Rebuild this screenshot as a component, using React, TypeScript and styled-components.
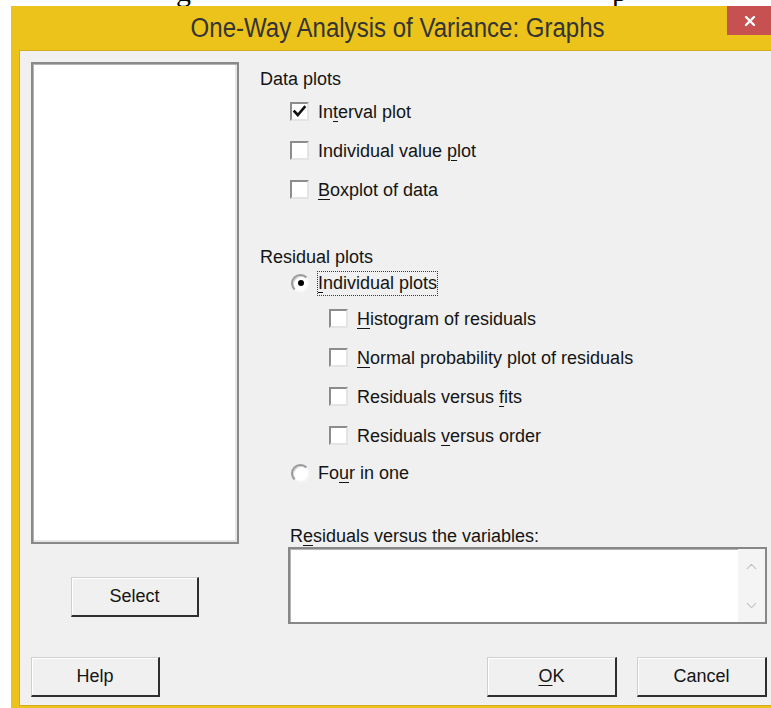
import styled, { createGlobalStyle } from 'styled-components'
import { ChevronUp, ChevronDown, X } from 'lucide-react'

const Global = createGlobalStyle`
    html, body {
        margin: 0;
        padding: 0;
        background: #ffffff;
        overflow: hidden;
    }
    body {
        width: 771px;
        height: 708px;
        font-family: "Liberation Sans", Arial, sans-serif;
    }
`

const FONT = `"Liberation Sans", Arial, sans-serif`

export default function App(){
    return(
        <>
            <Global />
            <DocStrip>
                <DocLine>
                    <Glyph $left={176}>g</Glyph>
                    <Glyph $left={421}>p</Glyph>
                </DocLine>
            </DocStrip>

            <Window>
                <TitleBar>
                    <Title><TitleText>One-Way Analysis of Variance: Graphs</TitleText></Title>
                    <CloseButton>
                        <X size={16} strokeWidth={3.6} color="#ffffff" />
                    </CloseButton>
                </TitleBar>

                <Client>
                    <Main>
                        <LeftCol>
                            <ListBox />
                            <SelectButton>Select</SelectButton>
                        </LeftCol>

                        <RightCol>
                            <GroupLabel $top={0}>Data plots</GroupLabel>
                            <Row $h={39} $indent={30} $top={3}>
                                <Check $checked />
                                <span>In<Key>t</Key>erval plot</span>
                            </Row>
                            <Row $h={39} $indent={30}>
                                <Check />
                                <span>Individual value <Key>p</Key>lot</span>
                            </Row>
                            <Row $h={39} $indent={30}>
                                <Check />
                                <span><Key>B</Key>oxplot of data</span>
                            </Row>

                            <GroupLabel $top={38}>Residual plots</GroupLabel>
                            <Row $h={30} $indent={31} $top={1}>
                                <Radio $checked $gap={7} />
                                <Focus><Key>I</Key>ndividual plots</Focus>
                            </Row>
                            <Row $h={39} $indent={69} $top={1}>
                                <Check />
                                <span><Key>H</Key>istogram of residuals</span>
                            </Row>
                            <Row $h={39} $indent={69}>
                                <Check />
                                <span><Key>N</Key>ormal probability plot of residuals</span>
                            </Row>
                            <Row $h={39} $indent={69}>
                                <Check />
                                <span>Residuals versus <Key>f</Key>its</span>
                            </Row>
                            <Row $h={39} $indent={69}>
                                <Check />
                                <span>Residuals <Key>v</Key>ersus order</span>
                            </Row>
                            <Row $h={30} $indent={31} $top={3}>
                                <Radio $gap={8} />
                                <span>Fo<Key>u</Key>r in one</span>
                            </Row>

                            <GroupLabel $top={38} $indent={30}>R<Key>e</Key>siduals versus the variables:</GroupLabel>
                            <TextBox>
                                <TextArea />
                                <ScrollBar>
                                    <ChevronUp size={17} strokeWidth={1.6} color="#c2c2c2" />
                                    <ChevronDown size={17} strokeWidth={1.6} color="#c2c2c2" />
                                </ScrollBar>
                            </TextBox>
                        </RightCol>
                    </Main>

                    <Footer>
                        <Button $w={129}>Help</Button>
                        <Actions>
                            <Button $w={130}><Key>O</Key>K</Button>
                            <Button $w={130}>Cancel</Button>
                        </Actions>
                    </Footer>
                </Client>
            </Window>
        </>
    )
}

function Check({ $checked }: { $checked?: boolean }){
    return(
        <CheckBox>
            {$checked && (
                <svg width="15" height="15" viewBox="0 0 15 15">
                    <path d="M2.5 7.5 L5.8 11 L12.5 3.2" fill="none" stroke="#111" strokeWidth="2.6" strokeLinecap="square" />
                </svg>
            )}
        </CheckBox>
    )
}

const DocStrip = styled.div`
    height: 6px;
    overflow: hidden;
`

const DocLine = styled.div`
    display: flex;
    margin-top: -24px;
    font-family: "Liberation Serif", "Times New Roman", serif;
    font-size: 30px;
    line-height: 30px;
    color: #000;
`

const Glyph = styled.span<{ $left: number }>`
    margin-left: ${p => p.$left}px;
`

const Window = styled.div`
    margin-left: 11px;
    width: 769px;
    height: 702px;
    background: #ebc31b;
    display: flex;
    flex-direction: column;
`

const TitleBar = styled.div`
    height: 44px;
    display: grid;
    grid-template-columns: 45px 1fr 45px;
    padding: 0 8px;
`

const Title = styled.div`
    grid-column: 2;
    display: flex;
    justify-content: center;
    align-items: center;
    padding-left: 4px;
`

/* the title font of the dialog is a condensed face, so squeeze it a little */
const TitleText = styled.span`
    display: inline-block;
    font-family: ${FONT};
    font-size: 27px;
    line-height: 44px;
    color: #343434;
    white-space: nowrap;
    transform: scaleX(0.89);
`

const CloseButton = styled.div`
    grid-column: 3;
    height: 29px;
    background: #c75050;
    display: flex;
    align-items: center;
    justify-content: center;
`

const Client = styled.div`
    flex: 1;
    margin: 0 8px 2px 8px;
    background: #f0f0f0;
    border-top: 1px solid #d3ad1f;
    border-left: 1px solid #d3ad1f;
    border-bottom: 1px solid #d3ad1f;
    padding: 11px 5px 0 11px;
    display: flex;
    flex-direction: column;
    font-family: ${FONT};
    font-size: 18px;
    color: #141414;
`

const Main = styled.div`
    display: flex;
    height: 562px;
`

const LeftCol = styled.div`
    width: 208px;
    display: flex;
    flex-direction: column;
`

const ListBox = styled.div`
    height: 482px;
    box-sizing: border-box;
    background: #ffffff;
    border: 2px solid #898989;
    box-shadow: inset 1px 1px 0 #b4b4b4, inset -2px -2px 0 #e6e6e6;
`

const Button = styled.div<{ $w?: number }>`
    width: ${p => p.$w ?? 128}px;
    height: 40px;
    box-sizing: border-box;
    background: #f0f0f0;
    border-style: solid;
    border-width: 1px 2px 2px 1px;
    border-color: #cfcfcf #2e2e2e #2e2e2e #cfcfcf;
    box-shadow: inset 1px 1px 0 #ffffff;
    display: flex;
    align-items: center;
    justify-content: center;
    font-size: 18px;
    color: #141414;
`

const SelectButton = styled(Button)`
    margin: 33px 0 0 40px;
`

const RightCol = styled.div`
    flex: 1;
    margin-left: 21px;
    padding-top: 7px;
    display: flex;
    flex-direction: column;
`

const GroupLabel = styled.div<{ $top: number; $indent?: number }>`
    height: 20px;
    line-height: 20px;
    margin-top: ${p => p.$top}px;
    padding-left: ${p => p.$indent ?? 0}px;
    white-space: nowrap;
`

const Row = styled.div<{ $h: number; $indent: number; $top?: number }>`
    height: ${p => p.$h}px;
    margin-top: ${p => p.$top ?? 0}px;
    padding-left: ${p => p.$indent}px;
    display: flex;
    align-items: center;
    white-space: nowrap;
    line-height: 20px;
`

const Key = styled.u`
    text-underline-offset: 3px;
    text-decoration-thickness: 1px;
`

const CheckBox = styled.div`
    width: 19px;
    height: 19px;
    box-sizing: border-box;
    margin-right: 9px;
    background: #ffffff;
    border-style: solid;
    border-width: 2px;
    border-color: #8c8c8c #e4e4e4 #e4e4e4 #8c8c8c;
    display: flex;
    align-items: center;
    justify-content: center;
    flex-shrink: 0;
`

const Radio = styled.div<{ $checked?: boolean; $gap: number }>`
    width: 19px;
    height: 19px;
    box-sizing: border-box;
    margin-right: ${p => p.$gap}px;
    border-radius: 50%;
    background: #ffffff;
    border: 2px solid;
    border-color: #9a9a9a #f4f4f4 #f4f4f4 #9a9a9a;
    box-shadow: inset 1px 1px 0 #d6d6d6;
    display: flex;
    align-items: center;
    justify-content: center;
    flex-shrink: 0;

    &:after {
        content: "";
        width: 6px;
        height: 6px;
        border-radius: 50%;
        background: ${p => (p.$checked ? '#000' : 'transparent')};
    }
`

const Focus = styled.span`
    border: 1px dotted #3a3a3a;
    padding: 1px 0 2px 0;
    line-height: 20px;
`

const TextBox = styled.div`
    margin: 1px 0 0 28px;
    width: 479px;
    height: 77px;
    box-sizing: border-box;
    border: 2px solid #878787;
    box-shadow: inset 1px 1px 0 #b4b4b4;
    background: #ffffff;
    display: flex;
`

const TextArea = styled.div`
    flex: 1;
`

const ScrollBar = styled.div`
    width: 27px;
    background: #f4f4f4;
    display: flex;
    flex-direction: column;
    align-items: center;
    justify-content: space-between;
    padding: 9px 0 8px 0;
`

const Footer = styled.div`
    margin-top: 33px;
    display: flex;
    justify-content: space-between;
`

const Actions = styled.div`
    display: flex;
    gap: 20px;
`
